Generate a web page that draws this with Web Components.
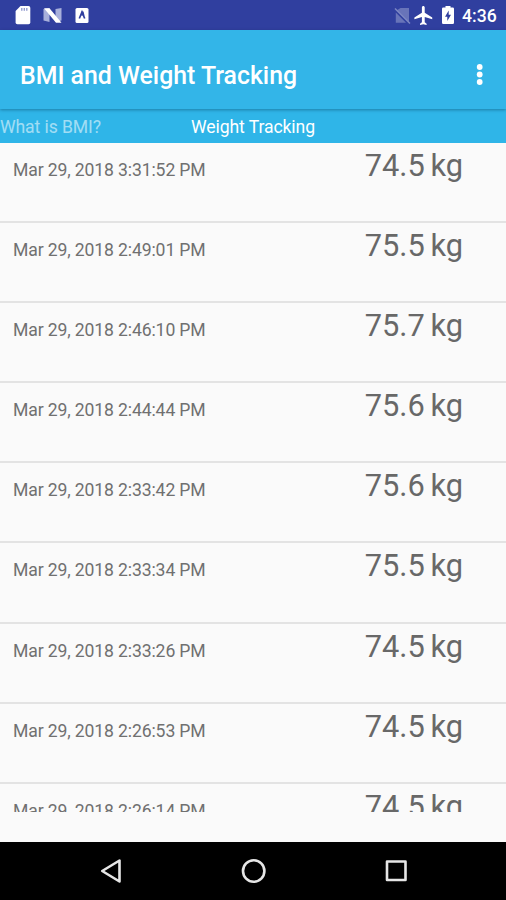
<!DOCTYPE html>
<html lang="en">
<head>
<meta charset="utf-8">
<title>BMI and Weight Tracking</title>
<style>
    body {
        margin: 0;
        font-family: Roboto, "Liberation Sans", sans-serif;
    }
</style>
</head>
<body>
<bmi-app></bmi-app>
<script>
class BmiStatusBar extends HTMLElement {

    constructor() {
        super();
        this.attachShadow({ mode: 'open' });
        this.shadowRoot.innerHTML = `
            <style>
                :host {
                    display: flex;
                    justify-content: space-between;
                    height: 30px;
                    background-color: #303f9f;
                    color: #fff;
                }
                svg {
                    display: block;
                }
                .right {
                    display: flex;
                }
                .time {
                    width: 44px;
                    font-size: 17.6px;
                    font-weight: 500;
                    line-height: 32px;
                    white-space: nowrap;
                }
            </style>
            <svg width="110" height="30" viewBox="0 0 110 30">
                <path fill="#fff" d="M20.500 6H28.500Q30.300 6 30.300 7.800V22.500Q30.300 24.300 28.500 24.300H17.400Q15.600 24.300 15.600 22.500V11Z"/>
                <path stroke="#8d96cc" stroke-width="1.300" d="M21.800 8V10.800M24.300 8V10.800M26.800 8V10.800"/>
                <path fill="#a8b0db" d="M43.500 9L49.500 8V22L43.500 20.500ZM55.500 9L61.500 8V20.500L55.500 22Z"/>
                <path fill="#fff" d="M44 8.200H49.500L61.500 22.800H56Z"/>
                <rect x="75.500" y="8" width="13" height="15" rx="1.500" fill="#fff"/>
                <path fill="none" stroke="#303f9f" stroke-width="1.700" d="M79.300 18.500L82 12L84.700 18.500"/>
                <path fill="#303f9f" d="M81.500 11.500H83.500L84.500 15.500H81Z"/>
            </svg>
            <div class="right">
                <svg width="72" height="30" viewBox="390 0 72 30">
                    <path fill="#6874b9" d="M400.500 8H409V22.500L396.500 10.500ZM395.800 12.500L406 22.800H395.800Z"/>
                    <path stroke="#7c87c3" stroke-width="1.500" d="M395 8.500L410 23.500"/>
                    <path fill="#fff" transform="translate(412.500 4) scale(.94 .96)" d="M21 16v-2l-8-5V3.500c0-.83-.67-1.500-1.500-1.500S10 2.670 10 3.500V9l-8 5v2l8-2.500V19l-2 1.500V22l3.500-1 3.500 1v-1.500L13 19v-5.500l8 2.500z"/>
                    <path fill="#fff" d="M443.300 7.500H445.500V6H450.500V7.500H452.700Q454 7.500 454 8.800V22.700Q454 24 452.700 24H443.300Q442 24 442 22.700V8.800Q442 7.500 443.300 7.500Z"/>
                    <path fill="#303f9f" d="M448.700 10.500L445 16.700H447.300V21L451 14.800H448.700Z"/>
                </svg>
                <div class="time">4:36</div>
            </div>
        `;
    }
}

class BmiToolbar extends HTMLElement {

    constructor() {
        super();
        this.attachShadow({ mode: 'open' });
        this.shadowRoot.innerHTML = `
            <style>
                :host {
                    display: flex;
                    justify-content: space-between;
                    align-items: center;
                    box-sizing: border-box;
                    height: 79px;
                    padding: 12px 22px 0 20px;
                    background-color: #33b5e8;
                    box-shadow: 0 1px 3px rgba(0, 40, 70, .4);
                    z-index: 1;
                }
                h1 {
                    margin: 0;
                    font-size: 24.85px;
                    font-weight: 500;
                    line-height: 30px;
                    white-space: nowrap;
                    color: #fff;
                }
                svg {
                    display: block;
                    margin-top: -2px;
                }
            </style>
            <h1><slot></slot></h1>
            <svg width="9" height="24" viewBox="0 0 9 24" fill="#fff">
                <circle cx="4.700" cy="4" r="2.900"/>
                <circle cx="4.700" cy="11.500" r="2.900"/>
                <circle cx="4.700" cy="19" r="2.900"/>
            </svg>
        `;
    }
}

class BmiTabs extends HTMLElement {

    constructor() {
        super();
        this.attachShadow({ mode: 'open' });
        this.shadowRoot.innerHTML = `
            <style>
                :host {
                    display: grid;
                    grid-template-columns: 1fr auto 1fr;
                    height: 34px;
                    background-color: #2fb5e8;
                    color: #fff;
                    font-size: 17.6px;
                    letter-spacing: -.1px;
                    line-height: 37px;
                    white-space: nowrap;
                }
                ::slotted([slot="previous"]) {
                    opacity: .55;
                }
            </style>
            <slot name="previous"></slot>
            <slot name="current"></slot>
        `;
    }
}

class BmiEntry extends HTMLElement {

    constructor() {
        super();
        this.attachShadow({ mode: 'open' });
        this.shadowRoot.innerHTML = `
            <style>
                :host {
                    display: flex;
                    flex: none;
                    justify-content: space-between;
                    align-items: baseline;
                    box-sizing: border-box;
                    height: 80.1px;
                    padding: 5px 43px 0 13px;
                    border-bottom: 2px solid #e3e3e3;
                    white-space: nowrap;
                }
                .date {
                    font-size: 17.6px;
                    letter-spacing: -.13px;
                    color: #707070;
                }
                .weight {
                    font-size: 30.8px;
                    line-height: 36px;
                    word-spacing: -2px;
                    color: #686868;
                }
            </style>
            <span class="date"><slot name="date"></slot></span>
            <span class="weight"><slot name="weight"></slot></span>
        `;
    }
}

class BmiNavBar extends HTMLElement {

    constructor() {
        super();
        this.attachShadow({ mode: 'open' });
        this.shadowRoot.innerHTML = `
            <style>
                :host {
                    display: flex;
                    justify-content: center;
                    align-items: center;
                    gap: 112px;
                    height: 58px;
                    background-color: #000;
                }
                svg {
                    display: block;
                    fill: none;
                    stroke: #e6e6e6;
                    stroke-width: 2.600;
                    stroke-linejoin: round;
                }
            </style>
            <svg width="30" height="30" viewBox="0 0 30 30"><path d="M23.500 4.500V25.500L6.200 15Z"/></svg>
            <svg width="30" height="30" viewBox="0 0 30 30"><circle cx="15.700" cy="15" r="10.700"/></svg>
            <svg width="30" height="30" viewBox="0 0 30 30"><rect x="7" y="5.500" width="18.500" height="18.500"/></svg>
        `;
    }
}

class BmiApp extends HTMLElement {

    constructor() {
        super();
        this.attachShadow({ mode: 'open' });
        this.entries = [
            ['Mar 29, 2018 3:31:52 PM', '74.5 kg'],
            ['Mar 29, 2018 2:49:01 PM', '75.5 kg'],
            ['Mar 29, 2018 2:46:10 PM', '75.7 kg'],
            ['Mar 29, 2018 2:44:44 PM', '75.6 kg'],
            ['Mar 29, 2018 2:33:42 PM', '75.6 kg'],
            ['Mar 29, 2018 2:33:34 PM', '75.5 kg'],
            ['Mar 29, 2018 2:33:26 PM', '74.5 kg'],
            ['Mar 29, 2018 2:26:53 PM', '74.5 kg'],
            ['Mar 29, 2018 2:26:14 PM', '74.5 kg']
        ];
        this.shadowRoot.innerHTML = `
            <style>
                :host {
                    display: flex;
                    flex-direction: column;
                    height: 900px;
                    overflow: hidden;
                    background-color: #fafafa;
                }
                .list {
                    display: flex;
                    flex-direction: column;
                    height: 669px;
                    margin-bottom: 30px;
                    overflow: hidden;
                }
            </style>
            <bmi-status-bar></bmi-status-bar>
            <bmi-toolbar>BMI and Weight Tracking</bmi-toolbar>
            <bmi-tabs>
                <span slot="previous">What is BMI?</span>
                <span slot="current">Weight Tracking</span>
            </bmi-tabs>
            <div class="list">
                ${this.entries.map(([date, weight]) => `
                    <bmi-entry>
                        <span slot="date">${date}</span>
                        <span slot="weight">${weight}</span>
                    </bmi-entry>
                `).join('')}
            </div>
            <bmi-nav-bar></bmi-nav-bar>
        `;
    }
}

customElements.define('bmi-status-bar', BmiStatusBar);
customElements.define('bmi-toolbar', BmiToolbar);
customElements.define('bmi-tabs', BmiTabs);
customElements.define('bmi-entry', BmiEntry);
customElements.define('bmi-nav-bar', BmiNavBar);
customElements.define('bmi-app', BmiApp);
</script>
</body>
</html>
